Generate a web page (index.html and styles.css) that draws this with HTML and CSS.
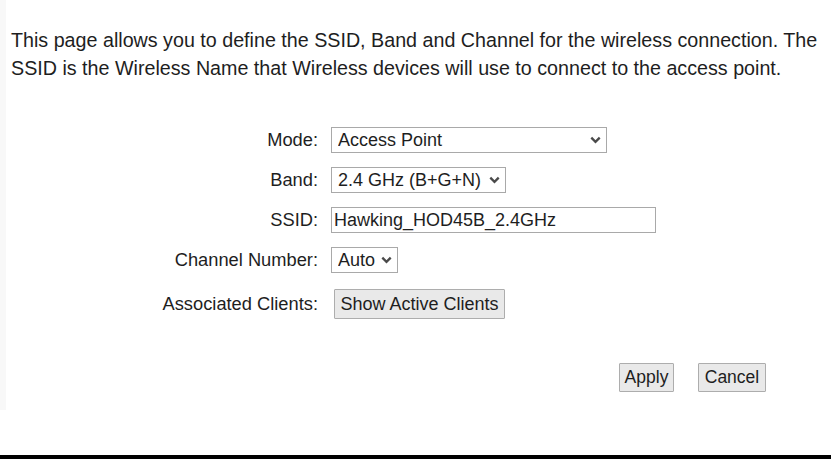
FILE: index.html
```html
<!DOCTYPE html>
<html>
<head>
<meta charset="utf-8">
<link rel="stylesheet" href="styles.css">
</head>
<body>
<div class="page">
  <p class="intro">This page allows you to define the SSID, Band and Channel for the wireless connection. The SSID is the Wireless Name that Wireless devices will use to connect to the access point.</p>
  <div class="form">
    <div class="row">
      <label class="lbl">Mode:</label>
      <span class="sel sel-mode">
        <select><option>Access Point</option></select>
        <svg class="chev" width="11" height="8" viewBox="0 0 11 8"><path d="M1.3 1.6 L5.5 5.8 L9.7 1.6" fill="none" stroke="#4a4a4a" stroke-width="2.3"/></svg>
      </span>
    </div>
    <div class="row">
      <label class="lbl">Band:</label>
      <span class="sel sel-band">
        <select><option>2.4 GHz (B+G+N)</option></select>
        <svg class="chev" width="11" height="8" viewBox="0 0 11 8"><path d="M1.3 1.6 L5.5 5.8 L9.7 1.6" fill="none" stroke="#4a4a4a" stroke-width="2.3"/></svg>
      </span>
    </div>
    <div class="row">
      <label class="lbl">SSID:</label>
      <input class="txt" type="text" value="Hawking_HOD45B_2.4GHz">
    </div>
    <div class="row">
      <label class="lbl">Channel Number:</label>
      <span class="sel sel-chan">
        <select><option>Auto</option></select>
        <svg class="chev" width="11" height="8" viewBox="0 0 11 8"><path d="M1.3 1.6 L5.5 5.8 L9.7 1.6" fill="none" stroke="#4a4a4a" stroke-width="2.3"/></svg>
      </span>
    </div>
    <div class="row row-last">
      <label class="lbl">Associated Clients:</label>
      <button class="btn btn-clients">Show Active Clients</button>
    </div>
  </div>
  <div class="actions">
    <button class="btn btn-apply">Apply</button>
    <button class="btn btn-cancel">Cancel</button>
  </div>
</div>
<div class="footer-bar"></div>
</body>
</html>
```
FILE: styles.css
```css
html, body {
  margin: 0;
  padding: 0;
  background: #ffffff;
}
body {
  width: 831px;
  height: 459px;
  position: relative;
  overflow: hidden;
  font-family: "Liberation Sans", Arial, sans-serif;
  font-size: 16px;
  color: #1e1e1e;
}
.page {
  height: 410px;
  border-left: 6px solid #f8f8f8;
  box-sizing: border-box;
  padding-left: 5px;
}
.intro {
  margin: 0;
  padding-top: 26px;
  width: 815px;
  line-height: 28px;
  font-size: 19.7px;
}
.form {
  margin-top: 38px;
  display: flex;
  flex-direction: column;
}
.row {
  display: flex;
  align-items: center;
  height: 40px;
}
.row-last {
  height: 48px;
}
.lbl {
  width: 320px;
  text-align: right;
  padding-right: 13px;
  box-sizing: border-box;
  flex: none;
  font-size: 18.3px;
}
.sel {
  position: relative;
  display: inline-flex;
}
.sel select {
  appearance: none;
  -webkit-appearance: none;
  font-family: "Liberation Sans", Arial, sans-serif;
  font-size: 18px;
  color: #1e1e1e;
  background: #fff;
  border: 1px solid #a9a9a9;
  border-radius: 0;
  height: 26px;
  padding: 0 0 0 6px;
  margin: 0;
  box-sizing: border-box;
  outline: none;
}
.sel-mode select { width: 276px; }
.sel-band select { width: 175px; }
.sel-chan select { width: 67px; }
.chev {
  position: absolute;
  right: 6px;
  top: 9px;
  pointer-events: none;
}
.txt {
  font-family: "Liberation Sans", Arial, sans-serif;
  font-size: 18px;
  color: #1e1e1e;
  width: 325px;
  height: 26px;
  box-sizing: border-box;
  border: 1px solid #a9a9a9;
  border-radius: 0;
  padding: 0 0 0 2px;
  margin: 0;
  outline: none;
}
.btn {
  font-family: "Liberation Sans", Arial, sans-serif;
  font-size: 17.5px;
  color: #1e1e1e;
  background: #e9e9e9;
  border: 1px solid #adadad;
  border-radius: 1px;
  padding: 0;
  margin: 0;
  box-sizing: border-box;
}
.btn-clients {
  margin-left: 3px;
  height: 30px;
  width: 171px;
  font-size: 18px;
}
.actions {
  display: flex;
  margin-top: 35px;
  padding-left: 608px;
  gap: 24px;
}
.btn-apply {
  width: 55px;
  height: 29px;
}
.btn-cancel {
  width: 68px;
  height: 29px;
}
.footer-bar {
  position: absolute;
  left: 0;
  right: 0;
  bottom: 0;
  height: 4px;
  background: #000;
}
```
